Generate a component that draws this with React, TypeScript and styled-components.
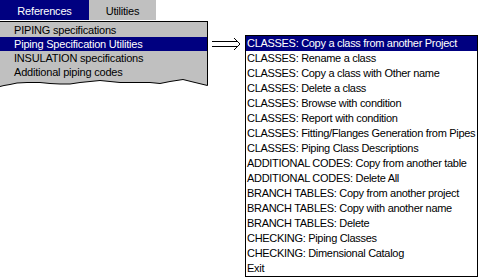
import React from "react";
import styled, { createGlobalStyle } from "styled-components";

const Global = createGlobalStyle`
  html, body { margin: 0; padding: 0; background: #ffffff; }
  body { font-family: "Liberation Sans", Arial, sans-serif; }
`;

const Page = styled.div`
  width: 478px;
  height: 277px;
  background: #ffffff;
  overflow: hidden;
`;

const TabBar = styled.div`
  display: flex;
  height: 20px;
`;

const Tab = styled.div<{ $active?: boolean; $width: number }>`
  width: ${(p) => p.$width}px;
  height: 20px;
  box-sizing: border-box;
  padding-top: 3px;
  line-height: 17px;
  font-size: 11px;
  letter-spacing: -0.2px;
  text-align: center;
  background: ${(p) => (p.$active ? "#000080" : "#c0c0c0")};
  color: ${(p) => (p.$active ? "#ffffff" : "#000000")};
`;

const Body = styled.div`
  display: flex;
  align-items: flex-start;
  margin-top: 1px;
`;

const LeftColumn = styled.div`
  width: 208px;
  display: flex;
  flex-direction: column;
`;

const Panel = styled.div`
  background: #c0c0c0;
  border-top: 1px solid #000000;
  border-right: 1px solid #000000;
  padding-top: 1px;
`;

const MenuRow = styled.div<{ $selected?: boolean }>`
  height: 14px;
  line-height: 14px;
  font-size: 11px;
  letter-spacing: -0.2px;
  padding-left: 14px;
  white-space: nowrap;
  background: ${(p) => (p.$selected ? "#000080" : "transparent")};
  color: ${(p) => (p.$selected ? "#ffffff" : "#000000")};
`;

const TornEdge = styled.svg`
  display: block;
  width: 208px;
  height: 9px;
`;

const ArrowSvg = styled.svg`
  display: block;
  width: 37px;
  height: 14px;
  margin-top: 16px;
`;

const ListBox = styled.div`
  width: 233px;
  margin-top: 14px;
  border: 1px solid #000000;
  box-sizing: border-box;
  background: #ffffff;
`;

const ListItem = styled.div<{ $selected?: boolean }>`
  height: 15px;
  line-height: 15px;
  font-size: 11px;
  letter-spacing: -0.3px;
  padding-left: 1px;
  white-space: nowrap;
  overflow: hidden;
  background: ${(p) => (p.$selected ? "#000080" : "#ffffff")};
  color: ${(p) => (p.$selected ? "#ffffff" : "#000000")};
`;

const menu = [
  "PIPING specifications",
  "Piping Specification Utilities",
  "INSULATION specifications",
  "Additional piping codes",
];

const items = [
  "CLASSES: Copy a class from another Project",
  "CLASSES: Rename a class",
  "CLASSES: Copy a class with Other name",
  "CLASSES: Delete a class",
  "CLASSES: Browse with condition",
  "CLASSES: Report with condition",
  "CLASSES: Fitting/Flanges Generation from Pipes",
  "CLASSES: Piping Class Descriptions",
  "ADDITIONAL CODES: Copy from another table",
  "ADDITIONAL CODES: Delete All",
  "BRANCH TABLES: Copy from another project",
  "BRANCH TABLES: Copy with another name",
  "BRANCH TABLES: Delete",
  "CHECKING: Piping Classes",
  "CHECKING: Dimensional Catalog",
  "Exit",
];

const wave: [number, number][] = [
  [0, 7.5], [4, 6.5], [10, 5.5], [17, 4], [27, 3.5], [40, 3.5], [50, 4.5],
  [60, 5], [70, 5], [80, 3.5], [90, 2.5], [100, 1.5], [110, 2.5], [120, 3.5],
  [135, 3.5], [150, 3.5], [160, 4.5], [170, 2.5], [183, 0.5], [193, 3],
  [207.5, 6.5],
];

export default function App() {
  const line = wave.map(([x, y]) => `${x},${y}`).join(" ");
  const fill = `0,0 208,0 ${wave
    .slice()
    .reverse()
    .map(([x, y]) => `${x},${y}`)
    .join(" ")}`;
  return (
    <Page>
      <Global />
      <TabBar>
        <Tab $active $width={89}>References</Tab>
        <Tab $width={67}>Utilities</Tab>
      </TabBar>
      <Body>
        <LeftColumn>
          <Panel>
            {menu.map((m, i) => (
              <MenuRow key={m} $selected={i === 1}>
                {m}
              </MenuRow>
            ))}
          </Panel>
          <TornEdge viewBox="0 0 208 9">
            <polygon points={fill} fill="#c0c0c0" />
            <line x1="207.5" y1="0" x2="207.5" y2="6.5" stroke="#000" strokeWidth="1" />
            <polyline points={line} fill="none" stroke="#000" strokeWidth="1" />
          </TornEdge>
        </LeftColumn>
        <ArrowSvg viewBox="0 0 37 14">
          <line x1="4" y1="4.5" x2="30" y2="4.5" stroke="#000" strokeWidth="1" />
          <line x1="4" y1="9.5" x2="30" y2="9.5" stroke="#000" strokeWidth="1" />
          <polyline points="26,1 32,7 26,13" fill="none" stroke="#000" strokeWidth="1" />
        </ArrowSvg>
        <ListBox>
          {items.map((t, i) => (
            <ListItem key={t} $selected={i === 0}>
              {t}
            </ListItem>
          ))}
        </ListBox>
      </Body>
    </Page>
  );
}
